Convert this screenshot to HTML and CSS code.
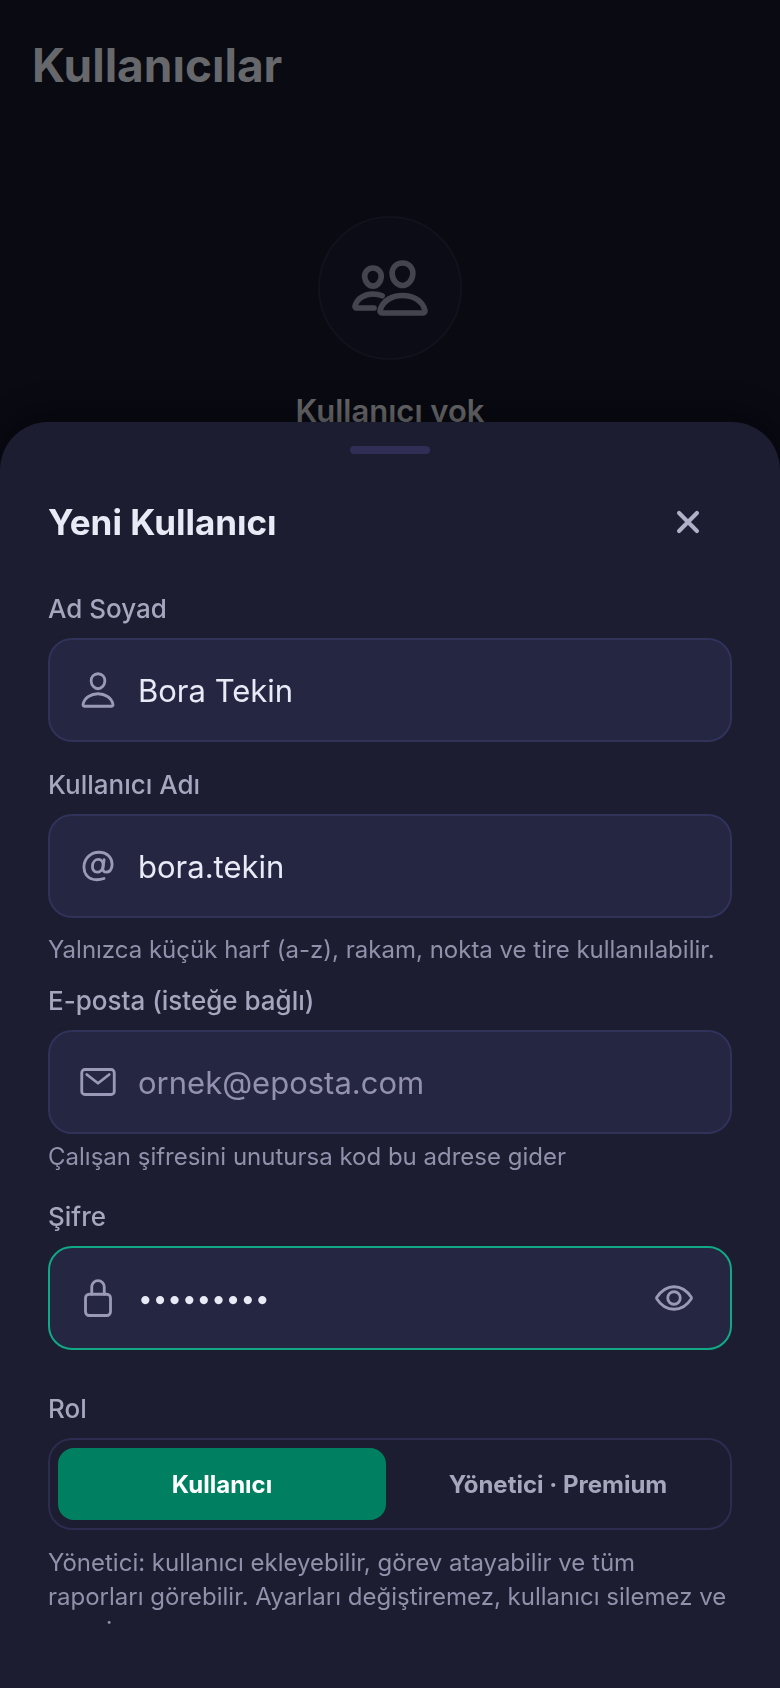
FILE: index.html
```html
<!DOCTYPE html>
<html lang="tr">
<head>
<meta charset="utf-8">
<meta name="viewport" content="width=device-width, initial-scale=1">
<title>Kullanıcılar</title>
<link rel="stylesheet" href="styles.css">
</head>
<body>
<main class="page">
  <h1 class="page-title">Kullanıcılar</h1>
  <section class="empty">
    <div class="empty-badge">
      <svg class="empty-icon" viewBox="0 0 512 512" aria-hidden="true">
        <path d="M402 168c-2.93 40.67-33.1 72-66 72s-63.12-31.32-66-72c-3-42.31 26.37-72 66-72s69 30.46 66 72z"/>
        <path d="M336 304c-65.17 0-127.84 32.37-143.54 95.41-2.08 8.34 3.15 16.59 11.72 16.59h263.65c8.57 0 13.77-8.25 11.72-16.59C463.85 335.36 401.18 304 336 304z"/>
        <path d="M200 185.94c-2.34 32.48-26.72 58.06-53 58.06s-50.7-25.57-53-58.06C91.61 152.15 115.34 128 147 128s55.39 24.77 53 57.94z"/>
        <path d="M206 306c-18.05-8.27-37.93-11.45-59-11.45-52 0-102.1 25.85-114.65 76.2-1.65 6.66 2.53 13.25 9.37 13.25H154"/>
      </svg>
    </div>
    <h2 class="empty-title">Kullanıcı yok</h2>
  </section>
</main>

<div class="sheet" role="dialog" aria-labelledby="sheet-title">
  <div class="handle"></div>
  <header class="sheet-header">
    <h2 class="sheet-title" id="sheet-title">Yeni Kullanıcı</h2>
    <button class="close" type="button" aria-label="Kapat">
      <svg class="close-icon" viewBox="0 0 512 512" aria-hidden="true"><path d="M152 152l208 208M360 152L152 360"/></svg>
    </button>
  </header>
  <form class="form">
    <div class="field">
      <label class="label" for="name">Ad Soyad</label>
      <div class="box">
        <svg class="icon" viewBox="0 0 512 512" aria-hidden="true">
          <path d="M344 144c-3.92 52.87-44 96-88 96s-84.15-43.12-88-96c-4-55 35-96 88-96s92 42 88 96z"/>
          <path d="M256 304c-87 0-175.3 48-191.64 138.6C62.39 453.52 68.57 464 80 464h352c11.44 0 17.62-10.48 15.65-21.4C431.3 352 343 304 256 304z"/>
        </svg>
        <input class="input" id="name" type="text" value="Bora Tekin">
      </div>
    </div>

    <div class="field">
      <label class="label" for="username">Kullanıcı Adı</label>
      <div class="box">
        <svg class="icon" viewBox="0 0 512 512" aria-hidden="true">
          <path d="M321 254c-5 48-38 81-76 81s-64-34-60-81c4-48 37-82 76-82s65 35 60 82z"/>
          <path d="M334 176l-15 110c-3 29 13 49 40 49 42 0 70-34 76-82C446 152 372 80 267 80 166 80 85 154 77 254c-8 105 58 178 163 178 37 0 65-6 92-16"/>
        </svg>
        <input class="input" id="username" type="text" value="bora.tekin">
      </div>
      <p class="hint hint-spaced">Yalnızca küçük harf (a-z), rakam, nokta ve tire kullanılabilir.</p>
    </div>

    <div class="field">
      <label class="label" for="email">E-posta (isteğe bağlı)</label>
      <div class="box">
        <svg class="icon" viewBox="0 0 512 512" aria-hidden="true">
          <rect x="48" y="96" width="416" height="320" rx="40"/>
          <path d="M112 160l144 112 144-112"/>
        </svg>
        <input class="input" id="email" type="email" placeholder="ornek@eposta.com">
      </div>
      <p class="hint">Çalışan şifresini unutursa kod bu adrese gider</p>
    </div>

    <div class="field">
      <label class="label" for="password">Şifre</label>
      <div class="box box-active">
        <svg class="icon" viewBox="0 0 512 512" aria-hidden="true">
          <path d="M336 208v-95a80 80 0 00-160 0v95"/>
          <rect x="96" y="208" width="320" height="272" rx="48"/>
        </svg>
        <input class="input input-password" id="password" type="password" value="boratekin">
        <button class="reveal" type="button" aria-label="Şifreyi göster">
          <svg class="icon" viewBox="0 0 512 512" aria-hidden="true">
            <path d="M255.66 112c-77.94 0-157.89 45.11-220.83 135.33a16 16 0 00-.27 17.77C82.92 340.8 161.8 400 255.66 400c92.84 0 173.34-59.38 221.79-135.25a16.14 16.14 0 000-17.47C428.89 172.28 347.8 112 255.66 112z"/>
            <circle cx="256" cy="256" r="80"/>
          </svg>
        </button>
      </div>
    </div>

    <fieldset class="field field-role">
      <legend class="label">Rol</legend>
      <div class="segments">
        <label class="segment"><input class="segment-input" type="radio" name="role" checked>Kullanıcı</label>
        <label class="segment"><input class="segment-input" type="radio" name="role">Yönetici · Premium</label>
      </div>
      <p class="hint hint-role">Yönetici: kullanıcı ekleyebilir, görev atayabilir ve tüm raporları görebilir. Ayarları değiştiremez, kullanıcı silemez ve premium veremez.</p>
    </fieldset>
  </form>
</div>
</body>
</html>
```
FILE: styles.css
```css
* {
  box-sizing: border-box;
}

body {
  margin: 0;
  height: 100vh;
  overflow: hidden;
  background: #090a12;
  font-family: Inter, "Liberation Sans", sans-serif;
}

h1, h2, p {
  margin: 0;
}

button, input {
  font-family: inherit;
}

svg {
  display: block;
  fill: none;
  stroke: currentColor;
  stroke-width: 36;
  stroke-linecap: round;
  stroke-linejoin: round;
}

.page {
  padding: 37px 32px;
}

.page-title {
  color: #67686c;
  font-size: 46px;
  line-height: 56px;
  font-weight: 700;
}

.empty {
  display: flex;
  flex-direction: column;
  align-items: center;
  gap: 31px;
  margin-top: 123px;
}

.empty-badge {
  display: grid;
  place-items: center;
  width: 144px;
  height: 144px;
  border: 2px solid #11121b;
  border-radius: 50%;
  background: #0c0c16;
  color: #44444f;
}

.empty-icon {
  width: 80px;
  height: 80px;
}

.empty-title {
  color: #67676a;
  font-size: 31px;
  line-height: 40px;
  font-weight: 600;
}

.sheet {
  position: fixed;
  right: 0;
  bottom: 0;
  left: 0;
  display: flex;
  flex-direction: column;
  height: 75vh;
  padding: 24px 48px 64px;
  border-radius: 48px 48px 0 0;
  background: #1c1d30;
  box-shadow: 0 -8px 32px rgba(0, 0, 0, 0.3);
}

.handle {
  flex: none;
  align-self: center;
  width: 80px;
  height: 8px;
  margin-bottom: 24px;
  border-radius: 4px;
  background: #2f2f56;
}

.sheet-header {
  flex: none;
  display: flex;
  align-items: center;
  justify-content: space-between;
  margin-bottom: 27px;
}

.sheet-title {
  color: #e8eaf6;
  font-size: 35px;
  line-height: 44px;
  font-weight: 700;
}

.close {
  display: grid;
  place-items: center;
  width: 88px;
  height: 88px;
  padding: 0;
  border: 0;
  background: none;
  color: #b0b0c8;
}

.close-icon {
  width: 44px;
  height: 44px;
  stroke-width: 48;
}

.form {
  flex: 1;
  min-height: 0;
  overflow: hidden;
}

.field {
  min-width: 0;
  margin: 0 0 27px;
  padding: 0;
  border: 0;
}

.label {
  display: block;
  margin-bottom: 13px;
  padding: 0;
  color: #a6a6be;
  font-size: 26px;
  line-height: 32px;
  font-weight: 500;
}

.box {
  display: flex;
  align-items: center;
  gap: 20px;
  height: 104px;
  padding: 0 28px;
  border: 2px solid #313259;
  border-radius: 24px;
  background: #252642;
  color: #9a9ab8;
}

.box-active {
  border-color: #10a885;
}

.icon {
  flex: none;
  width: 40px;
  height: 40px;
}

.input {
  flex: 1;
  min-width: 0;
  height: 48px;
  padding: 0;
  border: 0;
  outline: 0;
  background: none;
  color: #e8eaf6;
  font-size: 31px;
}

.input::placeholder {
  color: #9292b0;
  opacity: 1;
}

.input-password {
  font-size: 26px;
}

.reveal {
  display: grid;
  place-items: center;
  width: 56px;
  height: 56px;
  padding: 0;
  border: 0;
  background: none;
  color: inherit;
}

.hint {
  margin-top: 6px;
  color: #9091ab;
  font-size: 24px;
  line-height: 34px;
}

.hint-spaced {
  margin: 15px 0 -9px;
}

.field-role {
  margin-top: 43px;
}

.segments {
  display: grid;
  grid-template-columns: 1fr 1fr;
  gap: 8px;
  padding: 8px;
  border: 2px solid #2c2c50;
  border-radius: 24px;
}

.segment {
  display: grid;
  place-items: center;
  height: 72px;
  border-radius: 16px;
  color: #a6a6be;
  font-size: 24px;
  font-weight: 700;
}

.segment:has(:checked) {
  background: #008060;
  color: #ffffff;
}

.segment-input {
  position: absolute;
  opacity: 0;
}

.hint-role {
  margin-top: 16px;
}
```
